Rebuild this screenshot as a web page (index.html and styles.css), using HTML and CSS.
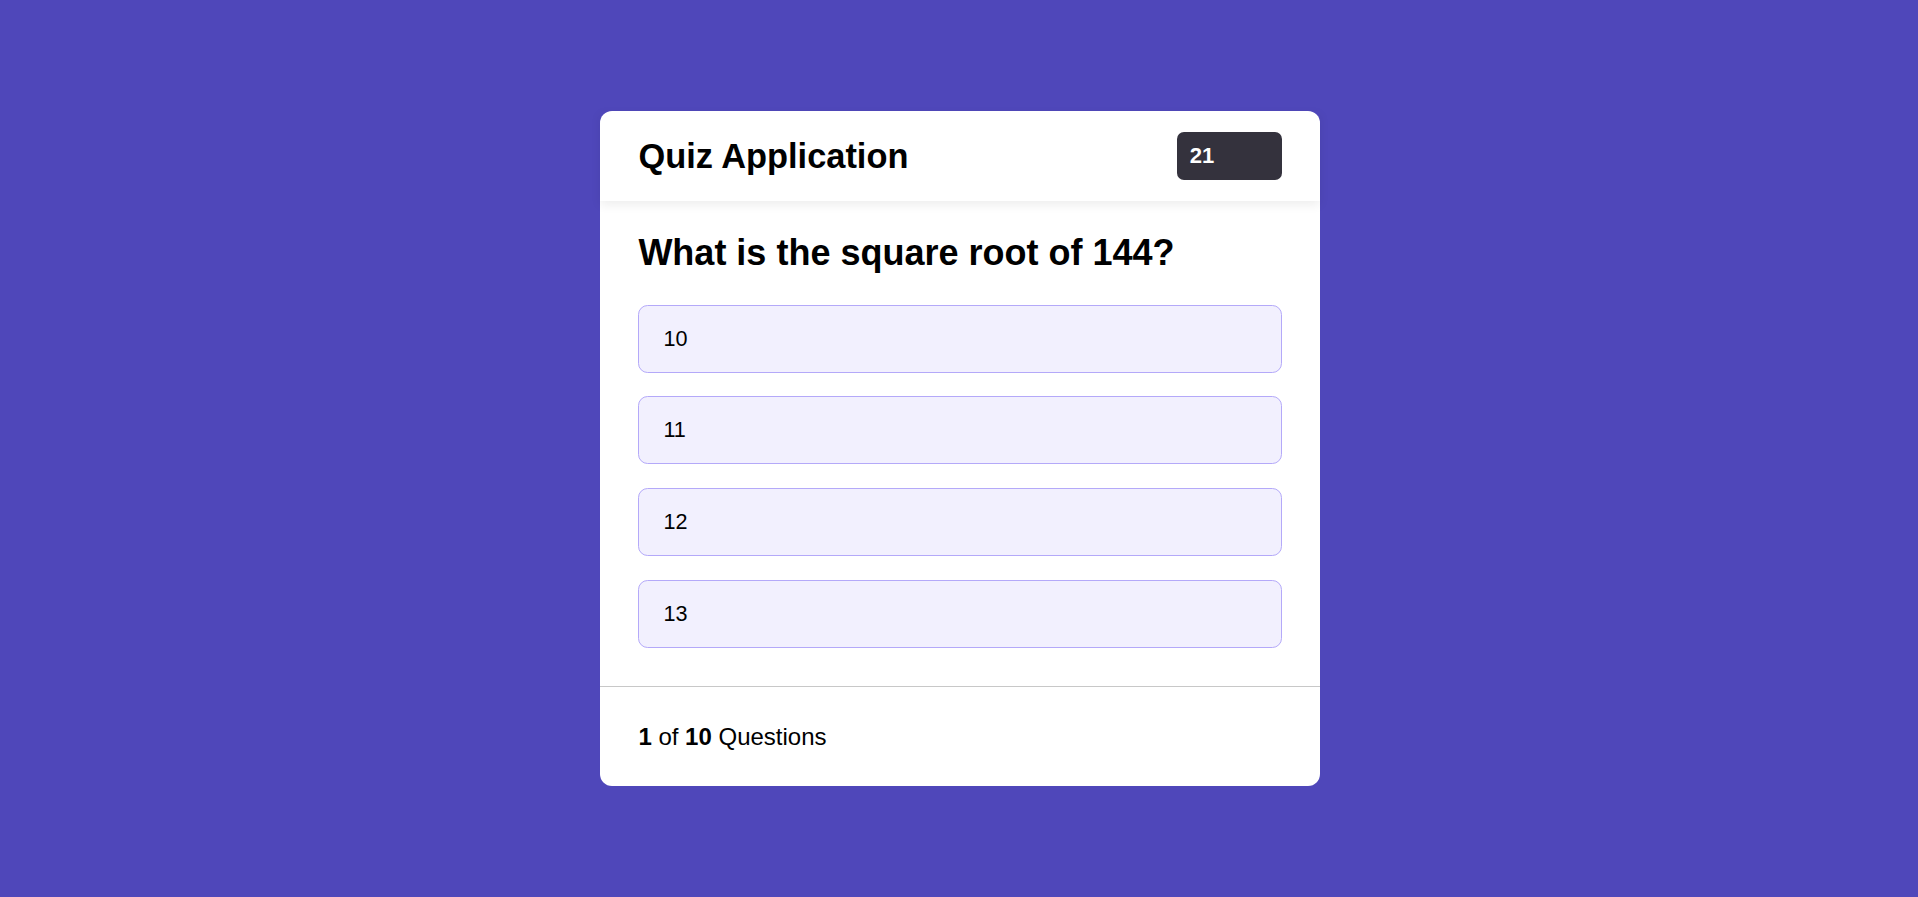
FILE: index.html
```html
<!DOCTYPE html>
<html lang="en">
<head>
<meta charset="utf-8">
<title>Quiz Application</title>
<link rel="stylesheet" href="styles.css">
</head>
<body>
  <main class="quiz">
    <header class="quiz-header">
      <h1 class="quiz-title">Quiz Application</h1>
      <div class="timer">21</div>
    </header>
    <section class="quiz-body">
      <h2 class="question">What is the square root of 144?</h2>
      <ul class="options">
        <li class="option">10</li>
        <li class="option">11</li>
        <li class="option">12</li>
        <li class="option">13</li>
      </ul>
    </section>
    <footer class="quiz-footer">
      <p class="progress"><b>1</b> of <b>10</b> Questions</p>
    </footer>
  </main>
</body>
</html>
```
FILE: styles.css
```css
* {
  box-sizing: border-box;
}

html, body {
  margin: 0;
  padding: 0;
}

body {
  min-height: 100vh;
  padding-left: 2px;
  background: #4f47ba;
  display: flex;
  align-items: center;
  justify-content: center;
  font-family: "Liberation Sans", Arial, sans-serif;
  color: #000;
}

.quiz {
  width: 720px;
  background: #fff;
  border-radius: 12px;
  display: flex;
  flex-direction: column;
}

.quiz-header {
  height: 90.6px;
  padding: 0 38.4px;
  display: flex;
  align-items: center;
  justify-content: space-between;
  box-shadow: 0 4px 10px rgba(0, 0, 0, 0.07);
  position: relative;
  z-index: 1;
}

.quiz-title {
  margin: 0;
  font-size: 34.4px;
  font-weight: 700;
}

.timer {
  width: 104.4px;
  height: 48.4px;
  background: #34323d;
  color: #fff;
  border-radius: 7px;
  font-size: 22px;
  font-weight: 700;
  padding-left: 12.6px;
  display: flex;
  align-items: center;
}

.quiz-body {
  padding: 30.5px 38.4px 38.4px;
}

.question {
  margin: 0 0 30.8px;
  font-size: 36px;
  font-weight: 700;
}

.options {
  list-style: none;
  margin: 0;
  padding: 0;
  display: flex;
  flex-direction: column;
  gap: 23.7px;
}

.option {
  height: 68px;
  display: flex;
  align-items: center;
  padding-left: 24px;
  background: #f2f0fe;
  border: 1.2px solid #b4a9f9;
  border-radius: 9.6px;
  font-size: 21.6px;
}

.quiz-footer {
  border-top: 1.2px solid #c8c8c8;
  padding: 35.7px 38.4px;
}

.progress {
  margin: 0;
  font-size: 24px;
  line-height: 27.6px;
}
```
